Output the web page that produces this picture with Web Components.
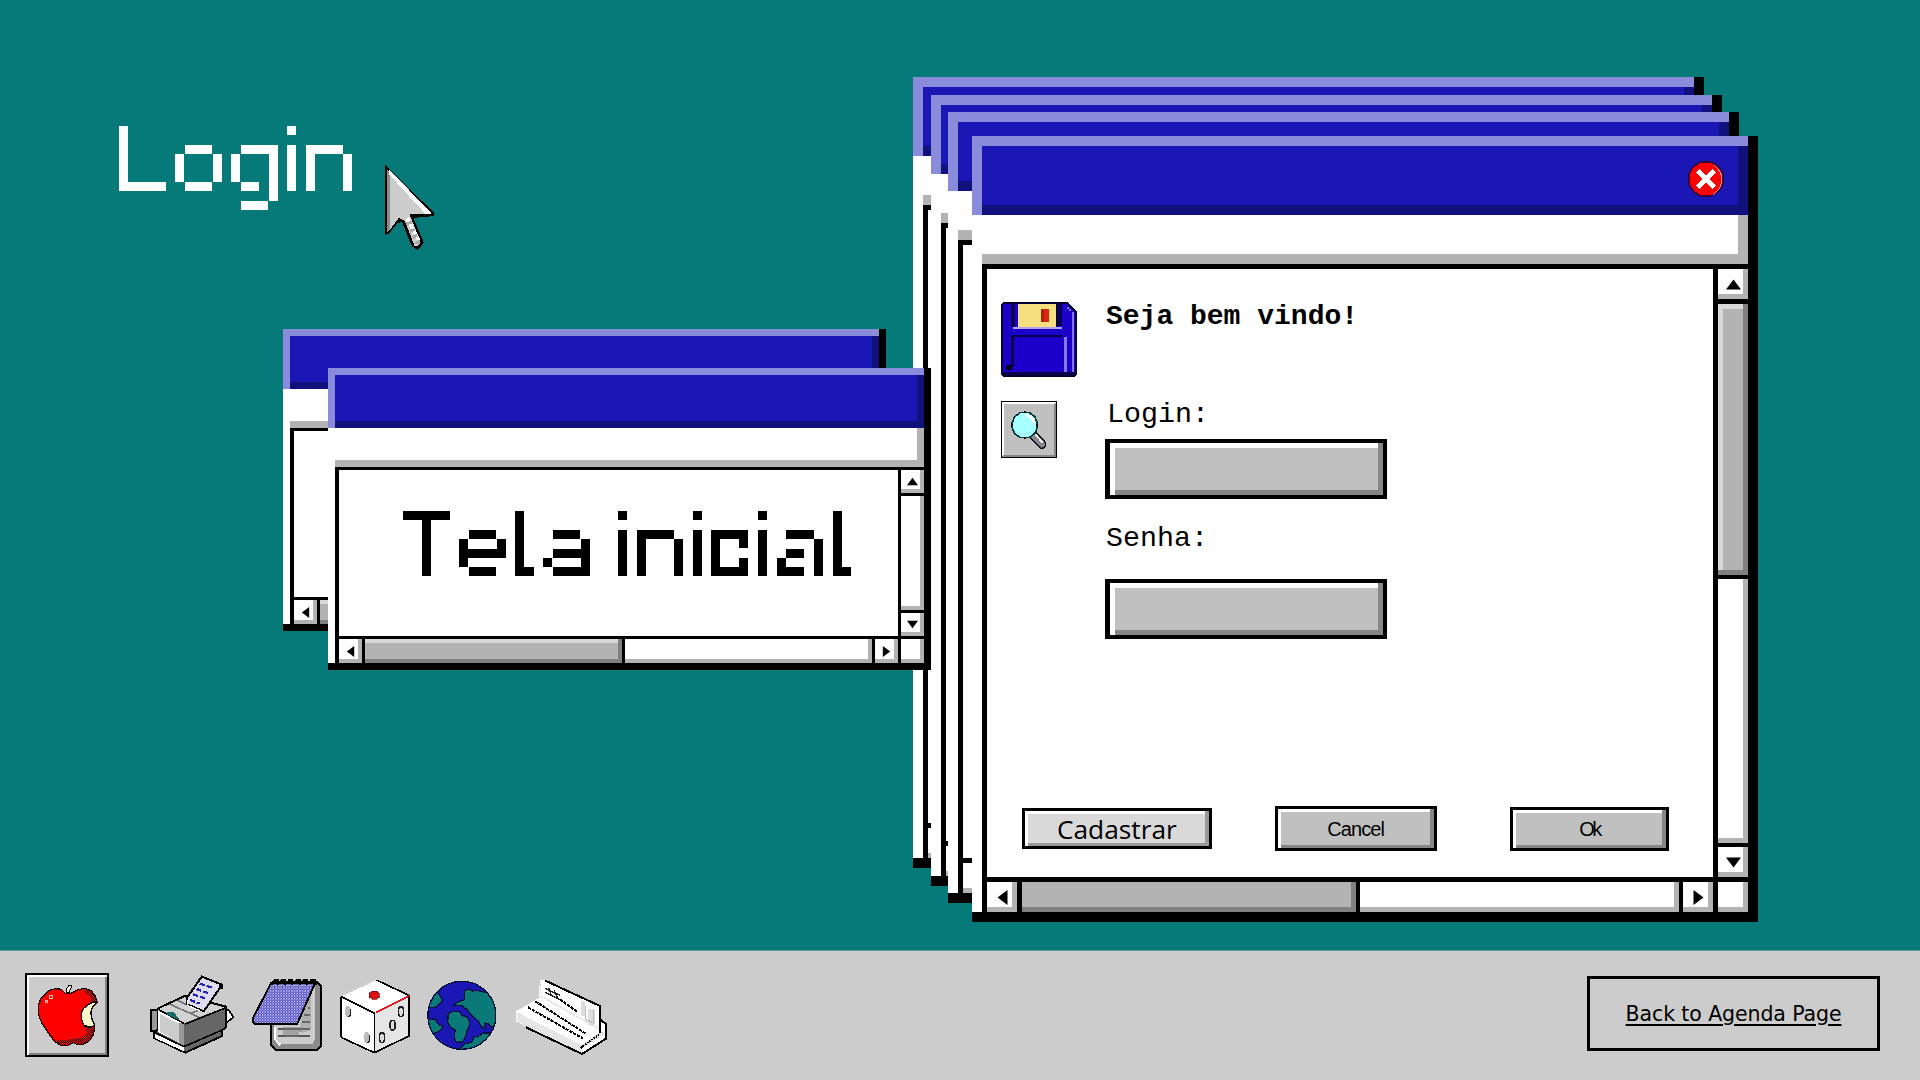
<!DOCTYPE html>
<html lang="pt">
<head>
<meta charset="utf-8">
<title>Login</title>
<style>
html,body{margin:0;height:100%;overflow:hidden}
</style>
</head>
<body>
<login-desktop></login-desktop>

<template id="t-window">
<style>
:host{display:flex;flex-direction:column;box-sizing:border-box;background:#fff;
 border-right:var(--edge) solid #000;border-bottom:var(--foot) solid #000}
.title{height:var(--title);flex:none;background:#1a17b5;display:flex;align-items:center;justify-content:flex-end;
 box-shadow:inset 0 var(--edge) #8b8bdc,inset var(--edge) 0 #8b8bdc,inset 0 calc(-1*var(--edge)) #11117e,inset calc(-1*var(--edge)) 0 #11117e}
.tool{height:var(--tool);flex:none;margin-left:var(--edge);box-shadow:inset 0 calc(-1*var(--edge)) #b3b3b3,inset calc(-1*var(--edge)) 0 #b3b3b3}
.body{flex:1;min-height:0;margin-left:var(--edge);background:#000;border-style:solid;border-color:#000;border-width:var(--top) 0 0 var(--left);
 display:grid;grid-template-columns:1fr var(--barw);grid-template-rows:minmax(0,1fr) var(--barh);gap:var(--gap)}
.view{background:#fff;min-width:0;min-height:0}
.v{display:flex;flex-direction:column;gap:var(--gap)}
.h{display:flex;gap:var(--gap)}
.c{background:#fff;box-shadow:inset calc(-1*var(--sh)) 0 #b3b3b3,inset 0 calc(-1*var(--sh)) #b3b3b3;display:flex;align-items:center;justify-content:center}
.v .b{height:var(--barw);flex:none}
.h .b{width:var(--barw);flex:none}
.t{flex:1}
.v .thumb,.h .thumb{flex:none;background:#b3b3b3}
.v .thumb{height:var(--vthumb);display:var(--vshow,block);box-shadow:inset calc(-1*var(--sh)) 0 #808080,inset 0 calc(-1*var(--sh)) #808080,inset var(--sh) 0 #d9d9d9,inset 0 var(--sh) #d9d9d9}
.h .thumb{width:var(--hthumb);box-shadow:inset calc(-1*var(--sh)) 0 #808080,inset 0 calc(-1*var(--sh)) #808080,inset 0 var(--hl,0px) #d9d9d9}
svg{width:var(--arrow);height:var(--arrow);display:block}
</style>
<div class="title"><slot name="title"></slot></div>
<div class="tool"></div>
<div class="body">
 <div class="view"><slot></slot></div>
 <div class="v">
  <div class="c b"><svg viewBox="0 0 15 15"><path d="M7.5 2.5 15 12.500H0z"/></svg></div>
  <div class="thumb"></div>
  <div class="c t"></div>
  <div class="c b"><svg viewBox="0 0 15 15"><path d="M7.500 12.500 15 2.500H0z"/></svg></div>
 </div>
 <div class="h">
  <div class="c b"><svg viewBox="0 0 15 15"><path d="M2.500 7.500 12.500 0V15z"/></svg></div>
  <div class="thumb"></div>
  <div class="c t"></div>
  <div class="c b"><svg viewBox="0 0 15 15"><path d="M12.500 7.500 2.500 0V15z"/></svg></div>
 </div>
 <div class="c"></div>
</div>
</template>

<template id="t-form">
<style>
:host{display:flex;flex-direction:column;justify-content:space-between;height:100%;box-sizing:border-box;padding:33px 44px 26px 14px}
.main{display:flex;gap:28px}
.icons{width:76px;display:flex;flex-direction:column;gap:24px}
form{display:flex;flex-direction:column;align-items:flex-start;font:28.3px/32px "Liberation Mono",monospace;color:#000}
h2{font:inherit;font-size:28px;font-weight:700;margin:-1px 0 65px 1px}
label{display:block;margin-bottom:9px;padding-left:2px}
.s{margin:23px 0 25px;padding-left:1px}
.foot{display:flex;align-items:center;padding-left:21px}
</style>
<div class="main">
 <div class="icons"><pixel-icon name="floppy"></pixel-icon><pixel-icon name="search"></pixel-icon></div>
 <form><h2>Seja bem vindo!</h2>
  <label>Login:</label><bevel-field></bevel-field>
  <label class="s">Senha:</label><bevel-field kind="password"></bevel-field>
 </form>
</div>
<div class="foot">
 <bevel-button style="width:190px;height:41px;--fill:#d9d9d9;--dark:#999;font:26.3px 'Open Sans',sans-serif">Cadastrar</bevel-button>
 <bevel-button style="width:162px;height:45px;margin-left:63px;--drop:2px;font:20px 'Liberation Sans',sans-serif;letter-spacing:-.9px">Cancel</bevel-button>
 <bevel-button style="width:160px;height:44px;margin-left:73px;--drop:2px;font:20px 'Liberation Sans',sans-serif;letter-spacing:-2.5px">Ok</bevel-button>
</div>
</template>

<template id="t-desktop">
<style>
:host{display:flex;flex-direction:column;width:1920px;height:1080px;background:#067979;overflow:hidden}
.desk{flex:1;position:relative}
.desk>*{position:absolute}
.big{--edge:10px;--foot:10px;--title:79px;--tool:49px;--top:5px;--left:5px;--gap:4.600px;--barw:30px;--barh:30px;--sh:5px;--vthumb:271px;--hthumb:334px;--arrow:15px;width:791px;height:791px}
.small{--edge:7px;--foot:7px;--title:60px;--tool:39px;--top:3px;--left:4px;--gap:3px;--barw:23px;--barh:24px;--sh:4px;--vthumb:0px;--vshow:none;--hthumb:257px;--hl:4px;--arrow:11px;width:603px;height:302px}
task-bar{flex:none}
</style>
<div class="desk">
 <retro-window class="big" style="left:913px;top:77px"></retro-window>
 <retro-window class="big" style="left:931px;top:95px"></retro-window>
 <retro-window class="big" style="left:948px;top:112px"></retro-window>
 <retro-window class="big" style="left:972px;top:136px;width:786px;height:786px">
  <pixel-icon slot="title" name="close" style="margin:7px 24px 0 0"></pixel-icon>
  <login-form></login-form>
 </retro-window>
 <retro-window class="small" style="left:283px;top:329px"></retro-window>
 <retro-window class="small" style="left:328px;top:368px"></retro-window>
 <pixel-text style="left:91px;top:98px;color:#fff" w="252" cells="0,5 6,5 12,5 18,1 20,5">Login</pixel-text>
 <pixel-text style="left:375px;top:483px" w="460" cells="0,5 6,5 12,1 15,5 21,1 23,1 25,5 31,1 33.08,4 38,1 40,5 46,1">Tela inicial</pixel-text>
 <pixel-icon name="cursor" style="left:384px;top:164px"></pixel-icon>
</div>
<task-bar></task-bar>
</template>

<template id="t-taskbar">
<style>
:host{display:flex;box-sizing:border-box;height:130px;background:#ccc;padding:22px 40px 0 25px;align-items:flex-start;border-top:1px solid #5c9c9c}
.apple{display:flex;width:84px;height:84px;box-sizing:border-box;border:2px solid #000;box-shadow:inset 2px 2px #fff,inset -2px -2px #808080;margin-right:41px}
.a{display:flex;gap:18px;padding-top:2px;align-items:flex-start}
a{margin:3px 0 0 auto;box-sizing:border-box;width:293px;height:75px;border:3px solid #000;color:#000;display:flex;align-items:center;justify-content:center;
 font:20.500px "DejaVu Sans",sans-serif;letter-spacing:-.1px;text-decoration:underline;text-decoration-thickness:2px;text-underline-offset:3px}
</style>
<div class="apple"><pixel-icon name="apple"></pixel-icon></div>
<div class="a">
<pixel-icon name="printer"></pixel-icon>
<pixel-icon name="notepad" style="margin-top:4px"></pixel-icon>
<pixel-icon name="dice" style="margin-top:4px"></pixel-icon>
<pixel-icon name="globe" style="margin-top:5px;margin-left:-1px"></pixel-icon>
<pixel-icon name="card" style="margin-top:4px"></pixel-icon>
</div>
<a href="#"><span>Back to Agenda Page</span></a>
</template>

<script>
const fromTemplate = id => class extends HTMLElement {
  constructor(){
    super();
    this.attachShadow({mode:'open'}).append(document.getElementById(id).content.cloneNode(true));
  }
};

/* Each icon: rendered width, rendered height, viewBox, markup */
const ICONS = {
cursor:[51,88,'882 192 153 264',`
 <path d="M884 194V404L896 402 922 370 936 366 966 440 984 450 1002 428 970 354 1032 348V338Z" fill="#000"/>
 <path d="M892 212 1016 338V342H958L992 426 982 440 974 438 944 362 926 354 896 394Z" fill="#ccc"/>
 <path d="M892 210V396L900 386V216Z" fill="#8c8c8c"/>
 <path d="M896 208 1024 338V343H1008L896 222Z" fill="#fff"/>
 <path d="M946 360 956 350 992 420 984 424Z" fill="#fff"/>
 <path d="M950 372l14-6M960 394l14-6M968 412l14-6M976 430l14-6" stroke="#aaa" stroke-width="9"/>`],
close:[36,36,'264 302 108 108',`
 <circle cx="318" cy="356" r="52" fill="#f00" stroke="#3a0038" stroke-width="5"/>
 <path d="M342 314Q366 332 366 360 362 388 340 402" fill="none" stroke="#ff8f9c" stroke-width="3"/>
 <path d="M293 331 343 381M343 331 293 381" stroke="#fff" stroke-width="13"/>`],
floppy:[76,75,'63 66 228 225',`
 <path d="M69 66H262L290 94V285L284 291H69L63 285V72Z" fill="#000030"/>
 <path d="M69 72H260L284 98V283H72L69 278Z" fill="#1a00c8"/>
 <path d="M92 72h12v68H92zM229 72h17v66H229zM92 164H250v8H101V260H92z" fill="#08004c"/>
 <path d="M115 73H228V140H115z" fill="#f6df7e"/><path d="M99 140H245v7H99z" fill="#b5a4e8"/>
 <path d="M183 87h24v38H183z" fill="#df2414"/><path d="M183 87h8v38H183z" fill="#a82410"/>
 <path d="M252 171h8V276H252zM275 97h7V276H275zM260 80h6v6h-6zM266 86h6v6h-6z" fill="#8374ef"/>
 <path d="M77 254H97v15H77z" fill="#000018"/><path d="M72 276H284v9H72z" fill="#09004e"/>`],
search:[56,57,'63 363 170 170',`
 <path d="M63 363H233V533H63z" fill="#000"/><path d="M67 367H229V529H67z" fill="#868686"/>
 <path d="M67 367H229L223 373H73V523L67 529z" fill="#fff"/><path d="M72 372H224V524H72z" fill="#c0c0c0"/>
 <path d="M160 463 187 492" stroke="#111" stroke-width="28" stroke-linecap="round"/>
 <path d="M160 463 187 492" stroke="#8b8491" stroke-width="19" stroke-linecap="round"/>
 <path d="M164 460 190 487" stroke="#eee" stroke-width="6"/>
 <path d="M122 397H148L166 410 173 428V443L166 460 148 472H122L104 460 97 443V428L104 410Z" fill="#a7ffff" stroke="#063c40" stroke-width="5"/>
 <path d="M140 405Q160 410 163 428" fill="none" stroke="#fff" stroke-width="9"/>
 <path d="M133 392h6v7h-6zM133 470h6v7h-6zM94 432h6v6h-6zM170 432h6v6h-6z" fill="#000"/>`],
apple:[80,80,'81 75 240 240',`
 <defs><pattern id="d" width="6" height="6" patternUnits="userSpaceOnUse"><path d="M0 0h3v3H0zM3 3h3v3H3z" fill="#200"/></pattern></defs>
 <path d="M132 136 150 120 168 116 184 118 196 130H214L232 120 254 115 272 121 284 135 292 156 278 170 272 190 276 212 284 232 280 254 268 272 248 284 232 284 220 278 204 286 182 286 164 274 146 250 126 220 115 192V166L122 148Z" fill="#f00" stroke="#200" stroke-width="4"/>
 <path d="M248 118 270 122 284 136 290 154 262 162 276 146Z" fill="url(#d)"/>
 <path d="M250 228 284 234 276 262 248 282H232L220 276 196 284 178 282 168 272 210 268 242 262 264 248Z" fill="url(#d)"/>
 <path d="M264 164 280 156 290 157 278 170 272 186 276 208 284 226 270 232 252 226 244 208V188L252 174Z" fill="#fffacb" stroke="#100" stroke-width="4"/>
 <path d="M198 128V120L206 107H213V114L207 128Z" fill="#f4f0d0" stroke="#000" stroke-width="3"/>
 <path d="M136 150h7v8h-7zM149 137h7v8h-7z" fill="none" stroke="#ffc4b4" stroke-width="3"/>`],
printer:[84,80,'449 75 255 240',`
 <path d="M680 180H688L702 202 684 216 676 210Z" fill="#fff" stroke="#000" stroke-width="5"/>
 <path d="M452 181H474V242H452z" fill="#999" stroke="#000" stroke-width="6"/>
 <path d="M472 176 554 138 680 170V232L668 240V258L556 308 462 264V246L472 240Z" fill="#666" stroke="#000" stroke-width="6"/>
 <path d="M474 178 554 142 676 172 552 220Z" fill="#d2d2d2"/>
 <path d="M474 181 552 222V286L474 246Z" fill="#fff"/><path d="M480 192 548 226V282L480 246Z" fill="#ccc"/>
 <path d="M536 218H552V286L536 278Z" fill="#999"/>
 <path d="M464 252 552 290V304L464 264Z" fill="#fff"/>
 <path d="M464 248 552 290 668 240M556 222 678 174M474 178 552 220" fill="none" stroke="#000" stroke-width="5"/>
 <path d="M500 186H520L536 204V210L500 194Z" fill="#176b66"/>
 <path d="M508 162 598 202M534 152 560 164M572 190 604 178" stroke="#777" stroke-width="5"/>
 <path d="M606 80 668 104 612 184 560 162 562 142Z" fill="#dedcee" stroke="#000" stroke-width="6"/>
 <path d="M562 150V166L600 182" stroke="#fff" stroke-width="4" fill="none"/>
 <path d="M600 101l38 12M590 117l38 13M580 133l36 12M570 150l30 11" stroke="#2321bb" stroke-width="7" stroke-dasharray="16 6"/>
 <path d="M658 101h13v15h-13z"/>`],
notepad:[70,72,'755 87 210 216',`
 <defs><pattern id="n" width="8" height="8" patternUnits="userSpaceOnUse"><path d="M0 0h8v8H0z" fill="#3b38bb"/><path d="M0 0h4v4H0zM4 4h4v4H4z" fill="#b6b4e8"/></pattern></defs>
 <path d="M824 96H950L962 108V288L950 300H828L812 286V210Z" fill="#8a8a8a" stroke="#000" stroke-width="6"/>
 <path d="M824 110H944V268L936 282H832L822 270V226Z" fill="#ccc"/>
 <path d="M824 232V268L840 286" stroke="#fff" stroke-width="5" fill="none"/>
 <path d="M832 237H928M832 258H928M904 216H928M912 195H928M922 174H930" stroke="#555" stroke-width="4"/>
 <path d="M848 232H906V246H896V260H850Z" fill="#777" opacity=".5"/><path d="M916 150 932 120V240L904 250 900 220Z" fill="#888" opacity=".4"/>
 <path d="M812 100H944L890 223H764L758 216V204Z" fill="url(#n)" stroke="#000" stroke-width="6"/>
 <path d="M814 102 822 91H832V104M838 102 844 91H854V104M860 102 866 91H876V104M882 102 888 91H898V104M904 102 910 91H920V104M926 102 932 91H944L948 104" fill="none" stroke="#000" stroke-width="6"/>
 <path d="M812 106H940" stroke="#aaa" stroke-width="4" stroke-dasharray="10 12"/>`],
dice:[70,75,'29 85 210 225',`
 <defs><pattern id="k" width="6" height="6" patternUnits="userSpaceOnUse"><path d="M0 0h6v6H0z" fill="#fff"/><path d="M0 0h3v3H0zM3 3h3v3H3z" fill="#ccc"/></pattern></defs>
 <path d="M32 138 138 88 236 134V256L132 306 32 260Z" fill="#fff"/>
 <path d="M132 188 236 134V256L132 306Z" fill="url(#k)"/>
 <path d="M138 88 236 134V256L132 306 32 260M32 138V260M32 138 132 188V306" fill="none" stroke="#000" stroke-width="5"/>
 <path d="M32 136 138 88" stroke="#ddd" stroke-width="4" stroke-dasharray="6 6"/>
 <path d="M136 186 236 136" stroke="#e01820" stroke-width="5"/>
 <path d="M124 121H140V126H147V141H140V146H124V141H117V126H124Z" fill="#e01010" stroke="#600" stroke-width="2"/>
 <g fill="#ddd" stroke="#222" stroke-width="5"><ellipse cx="212" cy="183" rx="8" ry="15"/><ellipse cx="187" cy="224" rx="8" ry="15"/><ellipse cx="155" cy="261" rx="8" ry="15"/></g>
 <g fill="#bbb"><ellipse cx="52" cy="182" rx="9" ry="17"/><ellipse cx="109" cy="261" rx="9" ry="17"/></g>
 <path d="M60 174V194L54 198M117 252V272L111 276" fill="none" stroke="#222" stroke-width="4"/>`],
globe:[70,71,'290 89 210 213',`
 <clipPath id="g"><circle cx="394.500" cy="195" r="102"/></clipPath>
 <circle cx="394.500" cy="195" r="102" fill="#1a17b5"/>
 <g clip-path="url(#g)" fill="#0a7a78" stroke="#02103c" stroke-width="4">
 <path d="M290 170 304 150 308 132 322 124 336 150 326 164 312 172Z"/>
 <path d="M286 208 314 206 324 222 338 228 328 242 308 250 304 270 280 250Z"/>
 <path d="M402 134V122L414 116 426 122 440 120 464 126 478 118 500 150V222L484 232 474 220 462 218 466 236 452 228 444 212 426 198 410 178 394 166 368 166 386 154 402 148Z"/>
 <path d="M354 190 366 184 388 184 396 196 408 198 418 212 418 226 410 242 404 262 398 274 378 276 372 262 374 238 360 232 352 214Z"/>
 <path d="M500 236 484 248 458 248 442 260 432 258 424 276 402 280 388 298 470 298Z"/>
 </g>
 <circle cx="394.500" cy="195" r="102" fill="none" stroke="#02103c" stroke-width="4"/>`],
card:[92,76,'555 85 276 228',`
 <defs><pattern id="c" width="6" height="6" patternUnits="userSpaceOnUse"><path d="M0 0h6v6H0z" fill="#fff"/><path d="M0 0h3v3H0zM3 3h3v3H3z" fill="#ccc"/></pattern></defs>
 <path d="M558 182 630 140 812 205 828 222V264L756 310 558 212Z" fill="#fff"/>
 <path d="M560 184 756 284V308L588 230 560 210Z" fill="url(#c)"/>
 <path d="M630 88H646L810 166V250H796L638 160 626 134Z" fill="#fff"/>
 <path d="M632 90V130M632 136 812 238" stroke="#ddd" stroke-width="4" fill="none" stroke-dasharray="8 3"/>
 <path d="M646 90 810 166V248M812 208 828 220V264L756 310 588 230M752 292 806 252" fill="none" stroke="#000" stroke-width="6"/>
 <path d="M690 146 742 184M616 152 766 248M594 170 760 264" stroke="#000" stroke-width="6" stroke-dasharray="10 3"/>
 <path d="M646 114 690 134M646 126 692 148M656 112 664 134M672 120 684 144" stroke="#222" stroke-width="4" fill="none"/>
 <path d="M752 152H766V196H752zM774 174H794V222H774z" fill="#ddd"/><path d="M766 166V206L790 216V178" stroke="#bbb" stroke-width="4" fill="none"/>
 <path d="M762 284 820 246" stroke="#ccc" stroke-width="10" stroke-dasharray="4 4"/>`]
};
class PixelIcon extends HTMLElement {
  connectedCallback(){
    const [w,h,box,body] = ICONS[this.getAttribute('name')];
    this.attachShadow({mode:'open'}).innerHTML =
      `<style>:host{display:block;width:${w}px;height:${h}px}svg{display:block}</style>
       <svg width="${w}" height="${h}" viewBox="${box}" preserveAspectRatio="none" shape-rendering="crispEdges">${body}</svg>`;
  }
}
/* Display text snapped to a 28/3 px cell grid, three cells per 28 px tile.
   cells: "column,width" of each character; its ink is centred on that span. */
class PixelText extends HTMLElement {
  connectedCallback(){
    const w=+this.getAttribute('w'), h=112, c=[4,14,23], cell=28/3, stretch=1.08, pad=28;
    let dots='', merge='';
    c.forEach(x=>c.forEach(y=>{
      dots+=`<feFlood x="${x}" y="${y}" width="1" height="1" flood-color="#fff" result="p${x}_${y}"/>`;
      merge+=`<feMergeNode in="p${x}_${y}"/>`;
    }));
    const ctx=document.createElement('canvas').getContext('2d');
    ctx.font='500 87px Inter';
    const text=this.textContent;
    const xs=this.getAttribute('cells').split(' ').map((s,i)=>{
      const [col,n]=s.split(',').map(Number), m=ctx.measureText(text[i]);
      const ink=(m.actualBoundingBoxRight-m.actualBoundingBoxLeft)/2;
      return ((col+n/2)*cell/stretch-ink).toFixed(2);
    });
    this.attachShadow({mode:'open'}).innerHTML =
     `<style>:host{display:block}svg{display:block}text{font:500 87px Inter,sans-serif;font-feature-settings:"cv05";font-kerning:none;white-space:pre}</style>
      <svg width="${w+pad*2}" height="${h+pad*2}" viewBox="${-pad} ${-pad} ${w+pad*2} ${h+pad*2}">
      <filter id="m" filterUnits="userSpaceOnUse" x="${-pad}" y="${-pad}" width="${w+pad*2}" height="${h+pad*2}" color-interpolation-filters="sRGB">
      ${dots}<feMerge x="0" y="0" width="28" height="28" result="cell">${merge}</feMerge>
      <feTile in="cell" result="grid"/>
      <feComposite in="SourceGraphic" in2="grid" operator="in"/>
      <feComponentTransfer><feFuncA type="discrete" tableValues="0 1"/></feComponentTransfer>
      <feMorphology operator="dilate" radius="5"/><feMorphology operator="erode" radius="1"/>
      </filter>
      <g filter="url(#m)"><text transform="scale(${stretch} 1)" x="${xs.join(' ')}" y="65.300" fill="currentColor"></text></g></svg>`;
    this.shadowRoot.querySelector('text').textContent=text;
    this.textContent='';
  }
}
class BevelButton extends HTMLElement {
  constructor(){
    super();
    this.attachShadow({mode:'open'}).innerHTML=`<style>:host{display:block}
    button{width:100%;height:100%;box-sizing:border-box;padding:var(--drop,0px) 0 0;border:3px solid #000;border-radius:0;background:var(--fill,#c0c0c0);font:inherit;letter-spacing:inherit;color:#000;
    box-shadow:inset -4px 0 var(--dark,#868686),inset 0 3px #fff,inset 3px 0 #fff,inset 0 -3px var(--dark,#868686)}</style><button><slot></slot></button>`;
  }
}
class BevelField extends HTMLElement {
  connectedCallback(){
    this.attachShadow({mode:'open'}).innerHTML=`<style>:host{display:block;width:282px;height:60px}
    input{display:block;width:100%;height:100%;box-sizing:border-box;border:solid #000;border-width:4px 4px 4px 5px;border-radius:0;background:#c0c0c0;padding:0 12px;font:inherit;outline:0;
    box-shadow:inset -5px 0 #868686,inset 0 5px #fff,inset 5px 0 #fff,inset 0 -5px #868686}</style><input type="${this.getAttribute('kind')||'text'}">`;
  }
}
customElements.define('pixel-icon',PixelIcon);
customElements.define('pixel-text',PixelText);
customElements.define('bevel-button',BevelButton);
customElements.define('bevel-field',BevelField);
customElements.define('retro-window',fromTemplate('t-window'));
customElements.define('login-form',fromTemplate('t-form'));
customElements.define('task-bar',fromTemplate('t-taskbar'));
customElements.define('login-desktop',fromTemplate('t-desktop'));
</script>
</body>
</html>
